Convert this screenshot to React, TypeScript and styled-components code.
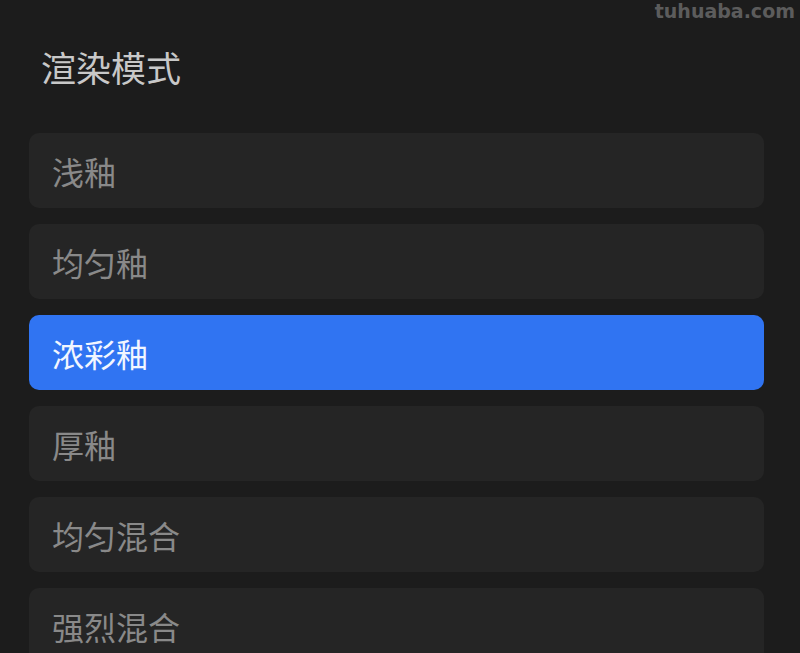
import styled, { createGlobalStyle } from "styled-components";

const GlobalStyle = createGlobalStyle`
  html, body {
    margin: 0;
    padding: 0;
    background: #1c1c1c;
  }
  body {
    font-family: "Noto Sans CJK SC", "Noto Sans", sans-serif;
  }
`;

const Page = styled.div`
  width: 800px;
  height: 653px;
  overflow: hidden;
  background: #1c1c1c;
  box-sizing: border-box;
  padding: 0 36px 0 29px;
  display: flex;
  flex-direction: column;
`;

const Watermark = styled.div`
  align-self: flex-end;
  margin-right: -31px;
  height: 22px;
  font-family: "DejaVu Sans", "Liberation Sans", sans-serif;
  font-weight: 700;
  font-size: 19px;
  line-height: 22px;
  color: #5c5c5c;
`;

const Title = styled.h1`
  margin: 17px 0 0 12px;
  height: 56px;
  font-size: 35px;
  line-height: 56px;
  font-weight: 400;
  color: #c8c8c8;
`;

const List = styled.div`
  margin-top: 38px;
  display: flex;
  flex-direction: column;
  gap: 16px;
`;

const Item = styled.div<{ $active: boolean }>`
  height: 75px;
  flex-shrink: 0;
  border-radius: 10px;
  background: ${({ $active }) => ($active ? "#3074f2" : "#252525")};
  color: ${({ $active }) => ($active ? "#f2f6ff" : "#898989")};
  display: flex;
  align-items: center;
  padding-left: 23px;
  font-size: 32px;
  font-weight: 400;
`;

const modes = ["浅釉", "均匀釉", "浓彩釉", "厚釉", "均匀混合", "强烈混合"];

export default function App() {
  const selected = "浓彩釉";

  return (
    <>
      <GlobalStyle />
      <Page>
        <Watermark>tuhuaba.com</Watermark>
        <Title>渲染模式</Title>
        <List>
          {modes.map((m) => (
            <Item key={m} $active={m === selected}>
              {m}
            </Item>
          ))}
        </List>
      </Page>
    </>
  );
}
